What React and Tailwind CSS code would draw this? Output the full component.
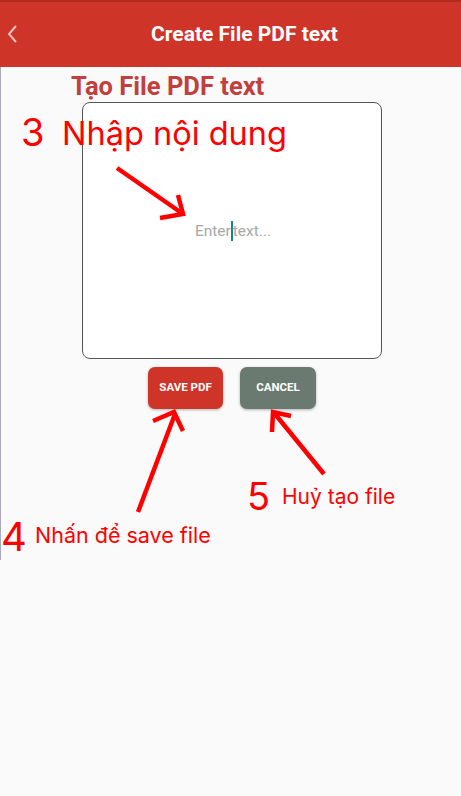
export default function App() {
  return (
    <div className="relative w-[461px] h-[796px] bg-[#fafafa] overflow-hidden" style={{ fontFamily: "Roboto, 'Noto Sans', sans-serif" }}>
      <header className="relative h-[67px] bg-[#cf3428] border-t-2 border-[#b52a20] flex items-center justify-center">
        <svg className="absolute left-[6px] top-[22px]" width="12" height="20" viewBox="0 0 12 20">
          <path d="M10 2 L3 10 L10 18" stroke="#f2c2bd" strokeWidth="2" fill="none" />
        </svg>
        <h1 className="text-white font-bold text-[21px] ml-[28px]">Create File PDF text</h1>
      </header>
      <div className="absolute left-0 top-[67px] w-px h-[493px] bg-[#a9a9c0]" />
      <main className="flex flex-col">
        <h2 className="ml-[71px] mt-[3px] text-[25.5px] leading-[32px] font-bold text-[#c13f3c]">Tạo File PDF text</h2>
        <div className="ml-[82px] w-[300px] h-[257px] bg-white border border-[#555] rounded-[8px] flex items-center justify-center">
          <span className="relative text-[15.5px] text-[#a8a8a8] mt-[2px] ml-[2px]">
            Enter
            <span className="inline-block w-[2px] h-[20px] bg-[#13897a] align-middle -mt-[2px]" />
            text...
          </span>
        </div>
        <div className="flex ml-[148px] mt-[8px] gap-[17px]">
          <button className="w-[75px] h-[42px] rounded-[7px] bg-[#cf3428] text-white font-bold text-[11.5px] shadow-[0_1px_3px_rgba(0,0,0,0.3)]">SAVE PDF</button>
          <button className="w-[76px] h-[42px] rounded-[7px] bg-[#6b7a70] text-white font-bold text-[11.5px] shadow-[0_1px_3px_rgba(0,0,0,0.3)]">CANCEL</button>
        </div>
      </main>

      <div className="absolute inset-0 pointer-events-none text-[#ff0000]" style={{ fontFamily: "Inter, 'Noto Sans', sans-serif" }}>
        <span className="absolute left-[21px] top-[110px] text-[38px] leading-[44px]">3</span>
        <span className="absolute left-[62px] top-[113px] text-[32.5px] leading-[42px]">Nhập nội dung</span>
        <span className="absolute left-[247px] top-[474px] text-[38px] leading-[44px]">5</span>
        <span className="absolute left-[282px] top-[482px] text-[21px] leading-[30px]">Huỷ tạo file</span>
        <span className="absolute left-[1px] top-[514px] text-[40px] leading-[46px]">4</span>
        <span className="absolute left-[35px] top-[520px] text-[21.5px] leading-[30px]">Nhấn để save file</span>
        <svg className="absolute inset-0" width="461" height="796">
          <g stroke="#ff0000" strokeWidth="4.5" fill="none" strokeLinecap="butt">
            <path d="M117 168 L183 214" />
            <path d="M160 218 L183 214 L178 195" />
            <path d="M138 512 L175 414" />
            <path d="M153 421 L174 412 L183 431" />
            <path d="M324 474 L275 414" />
            <path d="M272 432 L273 412 L291 416" />
          </g>
        </svg>
      </div>
    </div>
  );
}
